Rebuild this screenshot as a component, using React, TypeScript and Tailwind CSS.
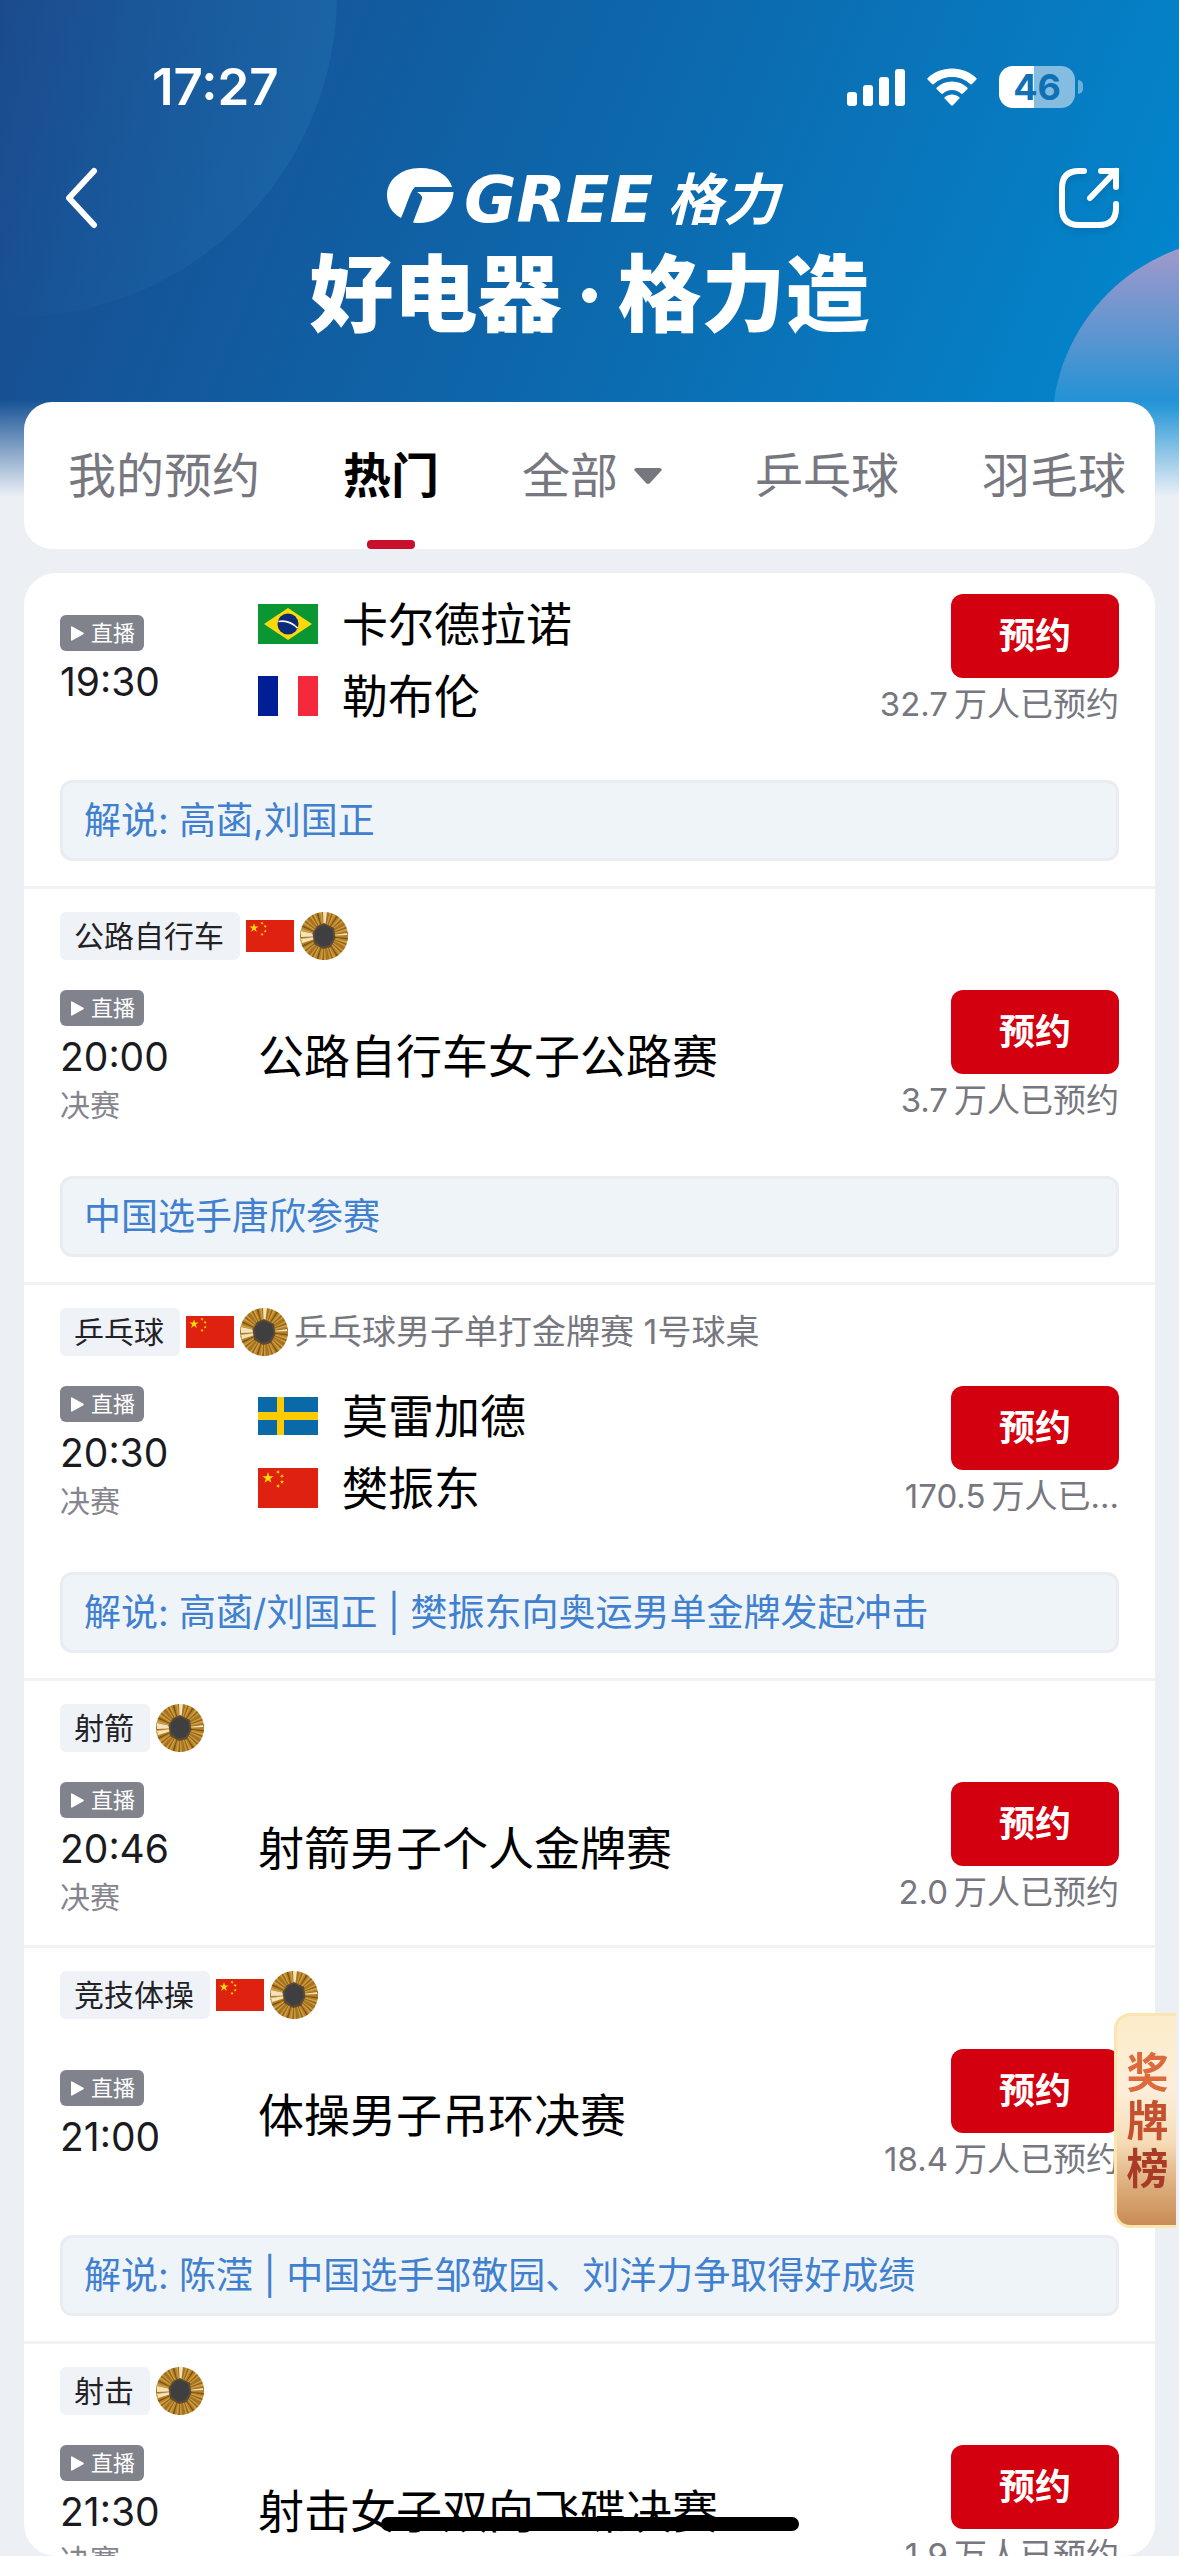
import React from "react";

type FlagCode = "br" | "fr" | "se" | "cn";

interface Team {
  flag: FlagCode;
  name: string;
}

interface Match {
  tag?: string;
  china?: boolean;
  medal?: boolean;
  detail?: string;
  time: string;
  final?: boolean;
  title?: string;
  teams?: Team[];
  count: string;
  countLabel?: string;
  note?: string;
}

const matches: Match[] = [
  {
    time: "19:30",
    teams: [
      { flag: "br", name: "卡尔德拉诺" },
      { flag: "fr", name: "勒布伦" },
    ],
    count: "32.7",
    note: "解说: 高菡,刘国正",
  },
  {
    tag: "公路自行车",
    china: true,
    medal: true,
    time: "20:00",
    final: true,
    title: "公路自行车女子公路赛",
    count: "3.7",
    note: "中国选手唐欣参赛",
  },
  {
    tag: "乒乓球",
    china: true,
    medal: true,
    detail: "乒乓球男子单打金牌赛 1号球桌",
    time: "20:30",
    final: true,
    teams: [
      { flag: "se", name: "莫雷加德" },
      { flag: "cn", name: "樊振东" },
    ],
    count: "170.5",
    countLabel: "万人已…",
    note: "解说: 高菡/刘国正 | 樊振东向奥运男单金牌发起冲击",
  },
  {
    tag: "射箭",
    medal: true,
    time: "20:46",
    final: true,
    title: "射箭男子个人金牌赛",
    count: "2.0",
  },
  {
    tag: "竞技体操",
    china: true,
    medal: true,
    time: "21:00",
    title: "体操男子吊环决赛",
    count: "18.4",
    note: "解说: 陈滢 | 中国选手邹敬园、刘洋力争取得好成绩",
  },
  {
    tag: "射击",
    medal: true,
    time: "21:30",
    final: true,
    title: "射击女子双向飞碟决赛",
    count: "1.9",
  },
];

function starPoints(cx: number, cy: number, r: number, turn = 0) {
  return Array.from({ length: 10 }, (_, i) => {
    const a = ((i * 36 - 90 + turn) * Math.PI) / 180;
    const d = i % 2 ? r * 0.38 : r;
    return `${(cx + d * Math.cos(a)).toFixed(2)},${(cy + d * Math.sin(a)).toFixed(2)}`;
  }).join(" ");
}

function Flag({ code, className }: { code: FlagCode; className: string }) {
  return (
    <svg viewBox="0 0 60 40" className={className} aria-hidden="true">
      {code === "br" && (
        <>
          <rect width="60" height="40" fill="#0a9632" />
          <path d="M30 4 54 20 30 36 6 20Z" fill="#fcd90b" />
          <circle cx="30" cy="20" r="10.5" fill="#0b2a78" />
          <path d="M20.5 17.5Q31 15.500 39.500 24" stroke="#fff" strokeWidth="1.600" fill="none" />
        </>
      )}
      {code === "fr" && (
        <>
          <rect width="60" height="40" fill="#fff" />
          <rect width="20" height="40" fill="#001e96" />
          <rect x="40" width="20" height="40" fill="#f5283c" />
        </>
      )}
      {code === "se" && (
        <>
          <rect y="1" width="60" height="38" fill="#0a6aa9" />
          <rect x="19" y="1" width="7" height="38" fill="#fecb00" />
          <rect y="16" width="60" height="8" fill="#fecb00" />
        </>
      )}
      {code === "cn" && (
        <>
          <rect width="60" height="40" fill="#df2110" />
          <polygon points={starPoints(10, 10, 6)} fill="#ffde00" />
          <polygon points={starPoints(20, 4, 2.2, 20)} fill="#ffde00" />
          <polygon points={starPoints(24, 8, 2.2, 40)} fill="#ffde00" />
          <polygon points={starPoints(24, 14, 2.2)} fill="#ffde00" />
          <polygon points={starPoints(20, 18, 2.2, 20)} fill="#ffde00" />
        </>
      )}
    </svg>
  );
}

const rayColors = ["#b98226", "#c9973c", "#93661a", "#d4a64c", "#b07a22", "#e8cf90", "#a57320", "#c28e34", "#7c5414", "#d0a045", "#b8842c"];

function Medal() {
  const rays = Array.from({ length: 80 }, (_, i) => {
    const a = (i * 4.5 * Math.PI) / 180;
    const b = ((i * 4.5 + 4.8) * Math.PI) / 180;
    return (
      <path
        key={i}
        d={`M24 24L${24 + 24 * Math.cos(a)} ${24 + 24 * Math.sin(a)}L${24 + 24 * Math.cos(b)} ${24 + 24 * Math.sin(b)}Z`}
        fill={rayColors[(i * i * 3 + i * 5) % rayColors.length]}
      />
    );
  });
  return (
    <svg viewBox="0 0 48 48" className="size-12 shrink-0" role="img" aria-label="金牌">
      <circle cx="24" cy="24" r="23.500" fill="#b98428" />
      {rays}
      <path d="M24 24 1 19 1 25Z M24 24 1 27 2 31Z M24 24 23 0 27 0Z M24 24 47 21 47 23Z" fill="#f3e3bb" />
      <polygon points="24,11 34,16 35.500,26 31,35 23,37 14,32 12.500,21 17,14" fill="#5b4a35" />
      <polygon points="24,13 32,17 33.500,26 29,33 22,34.500 15.500,29 15,20 19,15" fill="#3f3e40" />
    </svg>
  );
}

function StatusBar() {
  return (
    <div className="flex h-[50px] items-center justify-between pr-24 pl-[152px] text-white">
      <span className="font-[Inter] text-[51px] leading-[50px] font-semibold">17:27</span>
      <div className="flex items-center">
        <svg viewBox="0 0 59 38" className="h-[38px] w-[59px]" fill="#fff" aria-label="信号">
          <rect y="24" width="10" height="14" rx="3" />
          <rect x="16" y="17" width="10" height="21" rx="3" />
          <rect x="32" y="9" width="10" height="29" rx="3" />
          <rect x="48" y="1" width="10" height="37" rx="3" />
        </svg>
        <svg viewBox="0 0 50 38" className="ml-[21px] h-[38px] w-[50px]" fill="#fff" aria-label="无线网络">
          <path d="M25 0.500C15.500 0.500 7 4 .8 9.900a1.300 1.300 0 0 0 0 1.900L5 16a1.400 1.400 0 0 0 1.900 0C11.600 11.500 18 8.900 25 8.900s13.400 2.600 18.100 7.100a1.400 1.400 0 0 0 1.900 0l4.200-4.200a1.300 1.300 0 0 0 0-1.900C43 4 34.500.5 25 .5Z" />
          <path d="M25 13.500c-5.900 0-11.200 2.200-15.200 5.900a1.300 1.300 0 0 0 0 1.900l4.300 4.300a1.400 1.400 0 0 0 1.900 0C18.400 23.400 21.500 22 25 22s6.600 1.400 9 3.600a1.400 1.400 0 0 0 1.900 0l4.300-4.300a1.300 1.300 0 0 0 0-1.900C36.200 15.700 30.900 13.500 25 13.500Z" />
          <path d="M25 26.500c-2.700 0-5.200.9-7.100 2.500a1.200 1.200 0 0 0 0 1.800l6.200 6.400a1.300 1.300 0 0 0 1.800 0l6.200-6.400a1.200 1.200 0 0 0 0-1.800c-1.900-1.600-4.400-2.500-7.100-2.500Z" />
        </svg>
        <div className="ml-[22px] flex h-[42px] w-[76px] items-center justify-center rounded-[14px] bg-[linear-gradient(90deg,#fff_0,#fff_35px,#84bde0_35px)] font-[Inter] text-[36px] leading-[42px] font-bold text-[#0f70b6]">
          46
        </div>
        <div className="ml-[3px] h-[14px] w-[5px] rounded-r-full bg-[#6ab0db]" />
      </div>
    </div>
  );
}

function BrandLogo() {
  return (
    <svg viewBox="6 0 396 72" className="h-[72px] w-[396px] overflow-visible" fill="#fff" role="img" aria-label="GREE 格力">
      <path d="M34 6C52 6 63 14 66 25H29C24 29 21 43 15 56 6 51 1 43 1 33 1 18 15 6 34 6Z" />
      <path d="M31 30H67.500C67 46 53 61 34 61 31 61 29 61 27 60.500L36 37C37 34 34 32 31 30Z" />
      <text x="78" y="60" fontFamily="'DejaVu Sans', sans-serif" fontSize="64" fontWeight="700" fontStyle="italic" fill="#fff">
        GREE
      </text>
      <text x="281" y="58" fontFamily="'Noto Sans CJK SC', sans-serif" fontSize="56" fontWeight="700" fontStyle="italic" fill="#fff">
        格力
      </text>
    </svg>
  );
}

function Header() {
  return (
    <header className="relative h-[402px] shrink-0 pt-[62px]">
      <StatusBar />
      <div className="mt-[49px] flex h-[74px] items-center justify-between pr-[58px] pl-[63px]">
        <button type="button" aria-label="返回" className="flex h-[74px] w-[60px] items-center">
          <svg viewBox="0 0 36 62" className="h-[62px] w-9" fill="none" stroke="#fff" strokeWidth="6" strokeLinecap="round" strokeLinejoin="round">
            <path d="M31 4 6 31 31 58" />
          </svg>
        </button>
        <BrandLogo />
        <button type="button" aria-label="分享" className="drop-shadow-md">
          <svg viewBox="0 0 64 64" className="size-16" fill="none" stroke="#fff" strokeWidth="6" strokeLinecap="round">
            <path d="M27 5H22Q5 5 5 22V42Q5 59 22 59H42Q59 59 59 42V38" />
            <path d="M44 5H59V21M59 5 33 32" strokeLinejoin="miter" />
          </svg>
        </button>
      </div>
      <p className="mt-[14px] flex items-center justify-center text-[84px] leading-[92px] font-black text-white">
        好电器
        <span className="flex w-14 justify-center">
          <span className="size-[15px] rounded-full bg-white" />
        </span>
        格力造
      </p>
    </header>
  );
}

function Tabs() {
  return (
    <nav className="relative mx-6 flex h-[147px] shrink-0 items-stretch gap-[83px] overflow-hidden rounded-[28px] bg-white pl-[44px] text-[48px] leading-[72px] whitespace-nowrap text-[#77777f]">
      <button type="button" className="shrink-0">我的预约</button>
      <button type="button" className="relative shrink-0 font-bold text-black" aria-current="page">
        热门
        <span className="absolute bottom-0 left-1/2 h-[9px] w-12 -translate-x-1/2 rounded-[4px] bg-[#c8102e]" />
      </button>
      <button type="button" className="flex shrink-0 items-center gap-4 pr-2.5">
        全部
        <svg viewBox="0 0 28 16" className="h-4 w-7" fill="#77777f" aria-hidden="true">
          <path d="M2 0H26Q29 1 27 3L16 15Q14 17 12 15L1 3Q-1 1 2 0Z" />
        </svg>
      </button>
      <button type="button" className="shrink-0">乒乓球</button>
      <button type="button" className="shrink-0">羽毛球</button>
    </nav>
  );
}

function MatchRow({ match }: { match: Match }) {
  return (
    <li className="border-t-[3px] border-[#f1f2f4] px-9 pt-[23px] pb-[25px] first:border-t-0 first:pt-[21px]">
      {match.tag && (
        <div className="mb-[30px] flex h-12 items-center gap-1.5">
          <span className="rounded-md bg-[#eff2f6] pr-4 pl-[14px] text-[30px] leading-[48px] text-[#222226]">{match.tag}</span>
          {match.china && <Flag code="cn" className="h-8 w-12" />}
          {match.medal && <Medal />}
          {match.detail && <span className="text-[34px] leading-[48px] text-[#77777f]">{match.detail}</span>}
        </div>
      )}
      <div className="flex h-[136px] items-center">
        <div className="flex w-[198px] shrink-0 flex-col items-start">
          <span className="flex h-9 w-[84px] items-center gap-[7px] rounded-md bg-[#80828c] pl-[11px] text-[22px] leading-9 text-white">
            <svg viewBox="0 0 13 15" className="h-[15px] w-[13px]" fill="#fff" aria-hidden="true">
              <path d="M0 1Q0 0 1.200.4L12.400 6.800Q13.200 7.500 12.400 8.200L1.200 14.600Q0 15 0 14Z" />
            </svg>
            直播
          </span>
          <time className="mt-1 text-[39px] leading-[54px] text-[#1b1b1f]">{match.time}</time>
          {match.final && <span className="text-[30px] leading-[42px] text-[#85858d]">决赛</span>}
        </div>
        <div className="min-w-0 flex-1 pb-1 text-[46px] leading-[72px] text-black">
          {match.title}
          {match.teams?.map((team) => (
            <div key={team.name} className="flex items-center gap-6">
              <Flag code={team.flag} className="h-10 w-[60px]" />
              {team.name}
            </div>
          ))}
        </div>
        <div className="flex shrink-0 flex-col items-end self-start">
          <button type="button" className="h-[84px] w-[168px] rounded-xl bg-[#d3000f] text-[36px] leading-[84px] font-bold text-white">
            预约
          </button>
          <span className="mt-0.5 text-[33px] leading-[48px] whitespace-nowrap text-[#77777f]">
            <span className="mr-1.5">{match.count}</span>
            {match.countLabel ?? "万人已预约"}
          </span>
        </div>
      </div>
      {match.note ? (
        <p className="mt-[50px] h-[81px] rounded-xl border-[3px] border-[#e9edf2] bg-[#eff4f9] px-[21px] text-[37px] leading-[75px] text-[#4080cf]">
          {match.note}
        </p>
      ) : (
        <div className="h-0.5" />
      )}
    </li>
  );
}

export default function App() {
  return (
    <div className="relative flex h-screen flex-col overflow-hidden bg-[#ecf0f5] font-[Inter,'Noto_Sans_CJK_SC',sans-serif]">
      <div className="absolute inset-x-0 top-0 h-[510px] overflow-hidden bg-[linear-gradient(112deg,#1b4a8c_0%,#14569a_20%,#0d68ac_50%,#0879bf_75%,#0089d0_98%)]" aria-hidden="true">
        <div className="absolute -top-[331px] -left-[311px] size-[648px] rounded-full bg-[linear-gradient(90deg,rgba(40,120,180,0)_45%,rgba(40,120,180,0.35)_100%)]" />
        <div className="absolute top-[238px] -right-[253px] size-[380px] rounded-full bg-[linear-gradient(180deg,#a79acb_0%,#5f95d0_25%,#1b92d6_45%)]" />
        <div className="absolute inset-x-0 bottom-0 h-[110px] bg-[linear-gradient(180deg,rgba(236,240,245,0),#ecf0f5_88%)]" />
      </div>
      <Header />
      <Tabs />
      <main className="relative mx-6 mt-6 min-h-0 flex-1 overflow-y-auto rounded-[32px] bg-white [scrollbar-width:none]">
        <ul>
          {matches.map((match) => (
            <MatchRow key={match.time} match={match} />
          ))}
        </ul>
      </main>
      <a
        href="#medals"
        className="absolute right-[3px] bottom-[328px] flex h-[215px] w-[62px] flex-col items-center justify-center rounded-l-[16px] border-3 border-r-0 border-[#fbe5b0] bg-[linear-gradient(180deg,#fdecc9_0%,#fdeedb_35%,#f6ddb8_60%,#dcab7a_82%,#c98c55_100%)] pl-0.5 text-[42px] leading-[48px] font-bold"
      >
        <span className="text-[#dc6a3c]">奖</span>
        <span className="text-[#c4502f]">牌</span>
        <span className="text-[#a83a26]">榜</span>
      </a>
      <div className="absolute bottom-[25px] left-1/2 h-[14px] w-[418px] -translate-x-1/2 rounded-full bg-black" />
    </div>
  );
}
